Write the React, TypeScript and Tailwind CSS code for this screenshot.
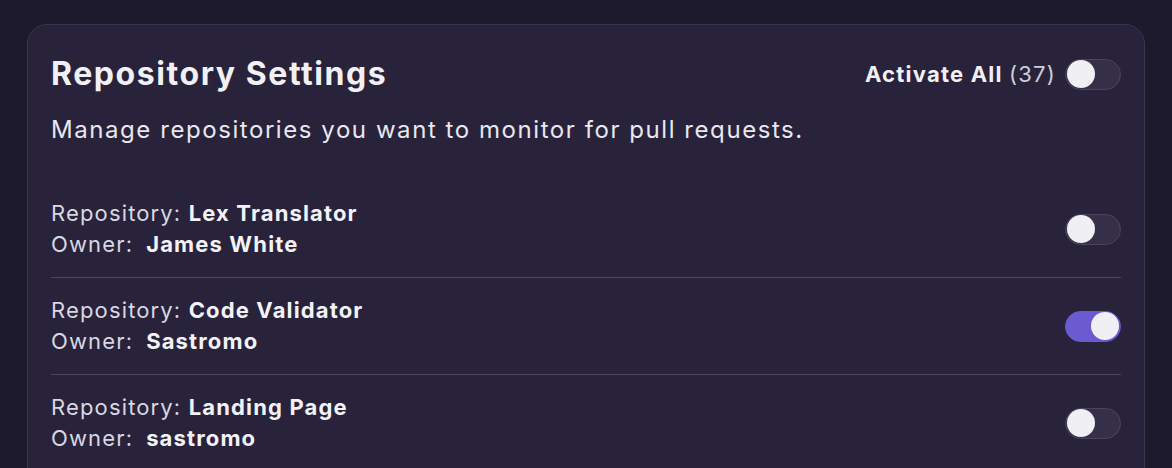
import React from "react";

const repos = [
  { name: "Lex Translator", owner: "James White", active: false },
  { name: "Code Validator", owner: "Sastromo", active: true },
  { name: "Landing Page", owner: "sastromo", active: false },
];

function Toggle({ on }: { on: boolean }) {
  return (
    <button
      type="button"
      className={
        on
          ? "flex h-[31px] w-[56px] shrink-0 items-center justify-end rounded-full border border-[#6c5bd0] bg-[#6c5bd0] p-[1px]"
          : "flex h-[31px] w-[56px] shrink-0 items-center justify-start rounded-full border border-[#4a455e] bg-[#352f48] p-[1px]"
      }
    >
      <span className="block h-[28px] w-[28px] rounded-full bg-[#f0eff4]" />
    </button>
  );
}

export default function App() {
  return (
    <div className="min-h-[468px] overflow-hidden bg-[#1d1a2d] px-[27px] pt-[24px] font-['Inter',sans-serif] text-[#f1f0f5]">
      <div className="rounded-[20px] border border-[#3a354e] bg-[#28233b] px-[23px] pt-[29px] pb-4">
        <div className="flex items-center justify-between">
          <h1 className="text-[32px] leading-[40px] font-bold tracking-[0.049em]">Repository Settings</h1>
          <div className="flex items-center gap-[9px]">
            <span className="text-[22px] tracking-[0.055em] font-bold">
              Activate All <span className="font-normal text-[#cfcdd8]">(37)</span>
            </span>
            <Toggle on={false} />
          </div>
        </div>
        <p className="mt-[20px] text-[24px] leading-[32px] tracking-[0.065em] text-[#e9e7ef]">
          Manage repositories you want to monitor for pull requests.
        </p>
        <div className="mt-[35px] flex flex-col">
          {repos.map((r, i) => (
            <div
              key={r.name}
              className={
                i < repos.length - 1
                  ? "flex items-center justify-between border-b border-[#4c4760] py-[17px]"
                  : "flex items-center justify-between py-[17px]"
              }
            >
              <div className="text-[22px] leading-[31px] tracking-[0.052em]">
                <div>
                  <span className="text-[#d9d7e1]">Repository:</span>{" "}
                  <span className="font-bold text-[#f3f2f7]">{r.name}</span>
                </div>
                <div>
                  <span className="text-[#d9d7e1]">Owner:</span>
                  <span className="ml-[13px] font-bold text-[#f3f2f7]">{r.owner}</span>
                </div>
              </div>
              <Toggle on={r.active} />
            </div>
          ))}
        </div>
      </div>
    </div>
  );
}
